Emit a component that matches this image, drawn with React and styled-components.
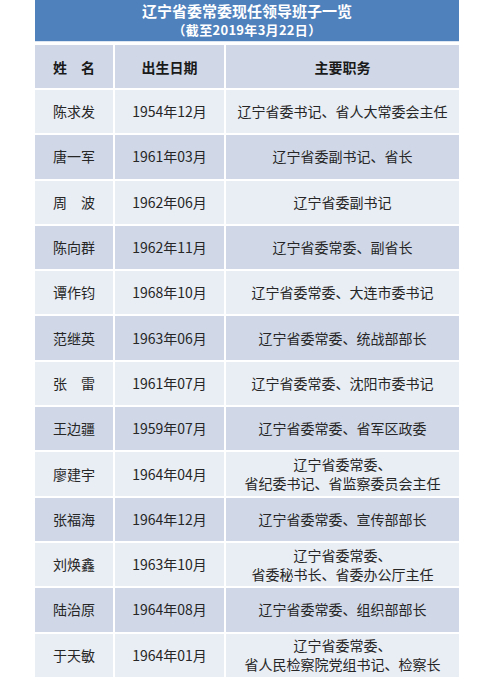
import styled, { createGlobalStyle } from 'styled-components'

const GlobalStyle = createGlobalStyle`
  html, body {
    margin: 0;
    padding: 0;
    background: #ffffff;
  }
  body {
    font-family: "Noto Sans CJK SC", "Noto Sans", sans-serif;
  }
`;

const leaders = [
  { name: '陈求发', born: '1954年12月', posts: ['辽宁省委书记、省人大常委会主任'] },
  { name: '唐一军', born: '1961年03月', posts: ['辽宁省委副书记、省长'] },
  { name: '周　波', born: '1962年06月', posts: ['辽宁省委副书记'] },
  { name: '陈向群', born: '1962年11月', posts: ['辽宁省委常委、副省长'] },
  { name: '谭作钧', born: '1968年10月', posts: ['辽宁省委常委、大连市委书记'] },
  { name: '范继英', born: '1963年06月', posts: ['辽宁省委常委、统战部部长'] },
  { name: '张　雷', born: '1961年07月', posts: ['辽宁省委常委、沈阳市委书记'] },
  { name: '王边疆', born: '1959年07月', posts: ['辽宁省委常委、省军区政委'] },
  { name: '廖建宇', born: '1964年04月', posts: ['辽宁省委常委、', '省纪委书记、省监察委员会主任'] },
  { name: '张福海', born: '1964年12月', posts: ['辽宁省委常委、宣传部部长'] },
  { name: '刘焕鑫', born: '1963年10月', posts: ['辽宁省委常委、', '省委秘书长、省委办公厅主任'] },
  { name: '陆治原', born: '1964年08月', posts: ['辽宁省委常委、组织部部长'] },
  { name: '于天敏', born: '1964年01月', posts: ['辽宁省委常委、', '省人民检察院党组书记、检察长'] },
];

export default function App() {
  return (
    <>
      <GlobalStyle />
      <Page>
        <TitleBar>
          <Title>辽宁省委常委现任领导班子一览</Title>
          <Subtitle>（截至2019年3月22日）</Subtitle>
        </TitleBar>
        <Table>
          <HeadCell>姓　名</HeadCell>
          <HeadCell>出生日期</HeadCell>
          <HeadCell>主要职务</HeadCell>
          {leaders.map((p, i) => (
            <Row key={p.name} $dark={i % 2 === 1}>
              <Cell>{p.name}</Cell>
              <Cell>{p.born}</Cell>
              <Cell>
                {p.posts.map((line) => (
                  <Line key={line}>{line}</Line>
                ))}
              </Cell>
            </Row>
          ))}
        </Table>
      </Page>
    </>
  )
}

const Page = styled.div`
  width: 424px;
  margin-left: 35px;
  display: flex;
  flex-direction: column;
  gap: 3px;
`;

const TitleBar = styled.div`
  height: 42px;
  padding-bottom: 1px;
  background: #4f81bd;
  border-bottom: 1px solid #dbe5f1;
  box-sizing: border-box;
  display: flex;
  flex-direction: column;
  align-items: center;
  justify-content: center;
  gap: 1px;
  color: #ffffff;
  font-weight: 700;
`;

const Title = styled.div`
  font-size: 15px;
  line-height: 18px;
`;

const Subtitle = styled.div`
  font-size: 13px;
  line-height: 17px;
  letter-spacing: 0.3px;
`;

const Table = styled.div`
  display: grid;
  grid-template-columns: 78px 109px 233px;
  grid-template-rows: 43px;
  grid-auto-rows: 43.3px;
  gap: 2px;
  background: #ffffff;
`;

const HeadCell = styled.div`
  background: #d0d8e8;
  display: flex;
  align-items: center;
  justify-content: center;
  font-size: 14px;
  font-weight: 700;
  color: #1a1a1a;
`;

const Row = styled.div`
  display: contents;
  & > div {
    background: ${(p) => (p.$dark ? '#d0d8e8' : '#e9edf4')};
  }
`;

const Cell = styled.div`
  display: flex;
  flex-direction: column;
  align-items: center;
  justify-content: center;
  font-size: 14px;
  line-height: 19px;
  color: #262626;
  text-align: center;
`;

const Line = styled.span`
  white-space: nowrap;
`;
